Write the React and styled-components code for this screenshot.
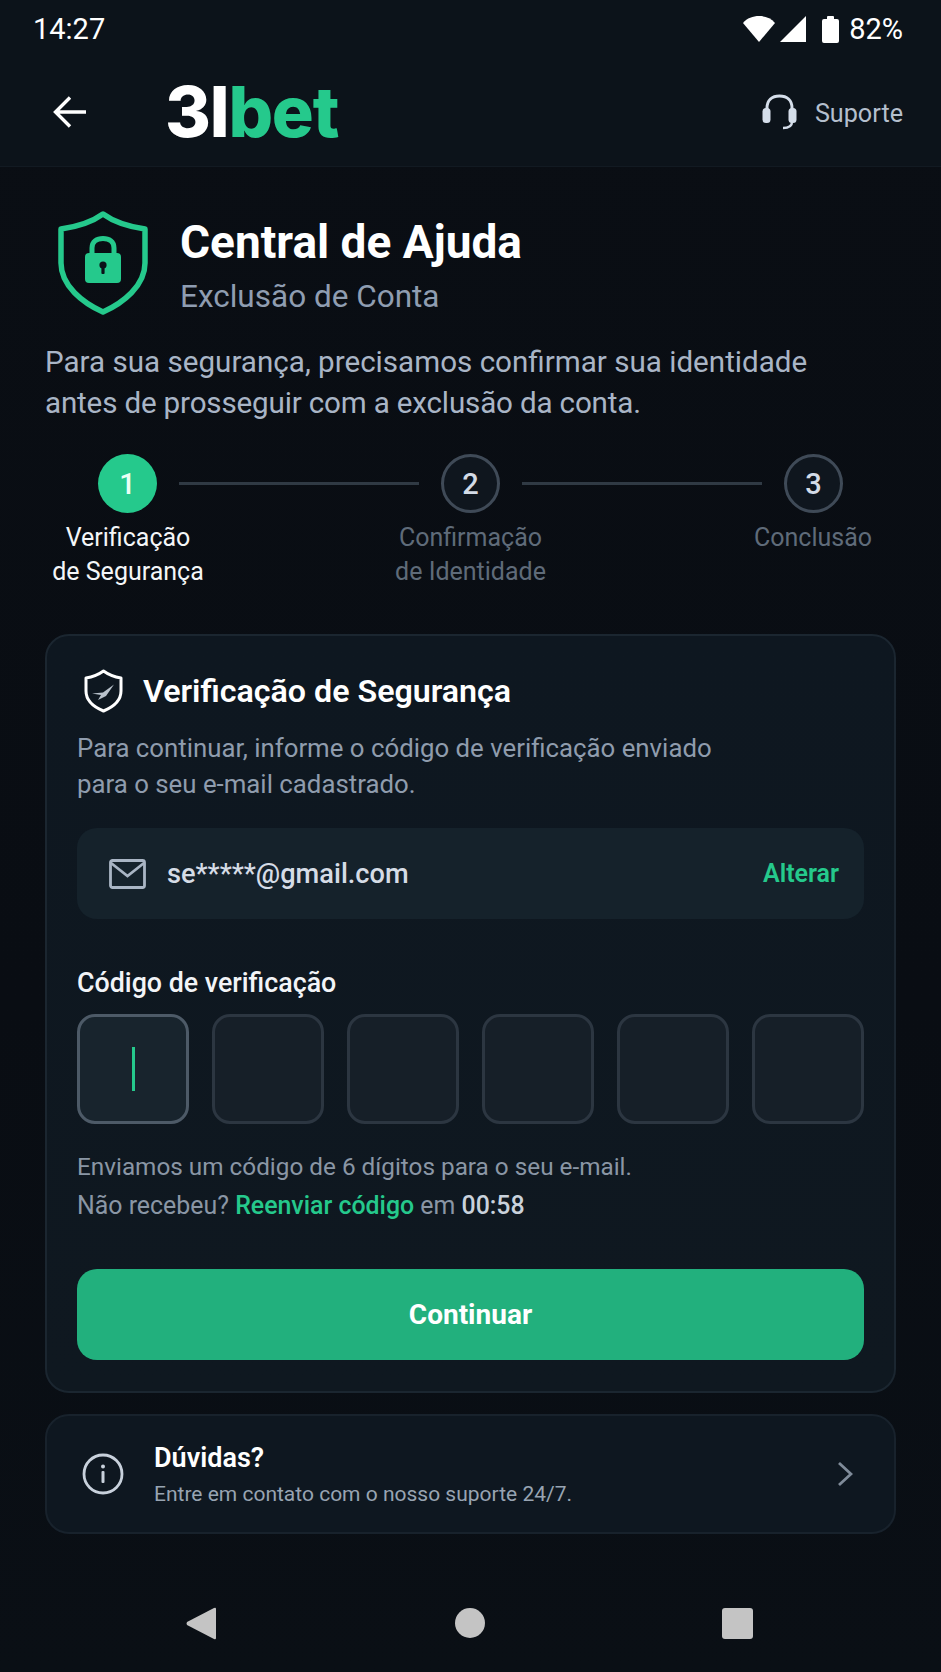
import React from "react";
import styled, { createGlobalStyle } from "styled-components";

const GREEN = "#25c98c";

const Global = createGlobalStyle`
  html, body { margin: 0; padding: 0; background: #090d13; }
  * { box-sizing: border-box; }
  body { font-family: Roboto, "Noto Sans", sans-serif; color: #fff; }
`;

const steps = [
  { n: 1, label: ["Verificação", "de Segurança"], active: true },
  { n: 2, label: ["Confirmação", "de Identidade"] },
  { n: 3, label: ["Conclusão"] },
];

export default function App() {
  return (
    <Page>
      <Global />
      <TopArea>
        <StatusBar>
          <Time>14:27</Time>
          <StatusIcons>
            <svg width="32" height="26" viewBox="0 0 32 26">
              <path d="M0 7 C4 2 10 0 16 0 C22 0 28 2 32 7 L16 26 Z" fill="#fff" />
            </svg>
            <svg width="26" height="26" viewBox="0 0 26 26">
              <path d="M26 0 V26 H0 Z" fill="#fff" />
            </svg>
            <Battery width="17" height="28" viewBox="0 0 17 28">
              <path d="M5 2 a1 1 0 0 1 1-1 h5 a1 1 0 0 1 1 1 v2 h3 a2 2 0 0 1 2 2 v20 a2 2 0 0 1-2 2 H2 a2 2 0 0 1-2-2 V6 a2 2 0 0 1 2-2 h3 z" fill="#fff" />
            </Battery>
            <Percent>82%</Percent>
          </StatusIcons>
        </StatusBar>
        <Header>
          <BackIcon width="34" height="32" viewBox="0 0 34 32" fill="none" stroke="#fff" strokeWidth="3.4">
            <path d="M33 16 H3 M17 1.5 L2.5 16 L17 30.5" />
          </BackIcon>
          <Logo>3l<span>bet</span></Logo>
          <Support>
            <svg width="35" height="36" viewBox="0 0 35 36" fill="none">
              <path d="M5 19 V14 C5 6 10 2 17.5 2 C25 2 30 6 30 14 V19" stroke="#d5deea" strokeWidth="3" />
              <rect x="0.5" y="14" width="8" height="15" rx="3.5" fill="#d5deea" />
              <rect x="26.5" y="14" width="8" height="15" rx="3.5" fill="#d5deea" />
              <path d="M30 28 C30 32 27 34 21 34" stroke="#d5deea" strokeWidth="2.4" />
            </svg>
            <SupportText>Suporte</SupportText>
          </Support>
        </Header>
      </TopArea>

      <Main>
        <Hero>
          <svg width="90" height="104" viewBox="0 0 90 104" fill="none">
            <path
              d="M45 3 C34 11 17 16 3 18 V52 C3 75 25 92 45 101 C65 92 87 75 87 52 V18 C73 16 56 11 45 3 Z"
              stroke={GREEN}
              strokeWidth="5.5"
              strokeLinejoin="round"
            />
            <path d="M34 44 V37 C34 30 39 27.5 45 27.5 C51 27.5 56 30 56 37 V44" stroke={GREEN} strokeWidth="5" />
            <rect x="27" y="42" width="36" height="30" rx="4" fill={GREEN} />
            <circle cx="45" cy="54" r="3.6" fill="#0b1118" />
            <rect x="43.4" y="55" width="3.2" height="8" rx="1" fill="#0b1118" />
          </svg>
          <HeroText>
            <Title>Central de Ajuda</Title>
            <Subtitle>Exclusão de Conta</Subtitle>
          </HeroText>
        </Hero>

        <Intro>
          Para sua segurança, precisamos confirmar sua identidade
          <IntroTail>antes de prosseguir com a exclusão da conta.</IntroTail>
        </Intro>

        <Stepper>
          <StepCircles>
            <Circle $active>1</Circle>
            <Connector />
            <Circle>2</Circle>
            <Connector />
            <Circle>3</Circle>
          </StepCircles>
          <StepLabels>
            {steps.map((s) => (
              <StepLabel key={s.n} $active={s.active}>
                {s.label.map((l) => (
                  <div key={l}>{l}</div>
                ))}
              </StepLabel>
            ))}
          </StepLabels>
        </Stepper>

        <Card>
          <CardHead>
            <svg width="39" height="44" viewBox="0 0 39 44" fill="none">
              <path
                d="M19.5 2 C14 6 8 8 2 9 V22 C2 32 11 38.5 19.5 42 C28 38.5 37 32 37 22 V9 C31 8 25 6 19.5 2 Z"
                stroke="#fff"
                strokeWidth="3"
                strokeLinejoin="round"
              />
              <path d="M8 24.5 L19 23.5 L30 15.5 L22 27 L14 31 L17 26 Z" fill="#b9c2cc" />
            </svg>
            <CardTitle>Verificação de Segurança</CardTitle>
          </CardHead>
          <CardText>
            Para continuar, informe o código de verificação enviado
            <br />
            para o seu e-mail cadastrado.
          </CardText>

          <EmailBox>
            <svg width="37" height="30" viewBox="0 0 37 30" fill="none" stroke="#a9b5c4" strokeWidth="2.8">
              <rect x="1.5" y="1.5" width="34" height="27" rx="2" />
              <path d="M2 4 L18.5 17 L35 4" />
            </svg>
            <EmailText>se*****@gmail.com</EmailText>
            <ChangeLink>Alterar</ChangeLink>
          </EmailBox>

          <FieldLabel>Código de verificação</FieldLabel>
          <OtpRow>
            {[0, 1, 2, 3, 4, 5].map((i) => (
              <OtpBox key={i} $focused={i === 0}>
                {i === 0 && <Caret />}
              </OtpBox>
            ))}
          </OtpRow>

          <Hints>
            <Hint>Enviamos um código de 6 dígitos para o seu e-mail.</Hint>
            <Hint $large>
              Não recebeu? <Resend>Reenviar código</Resend> em <Timer>00:58</Timer>
            </Hint>
          </Hints>

          <PrimaryButton>Continuar</PrimaryButton>
        </Card>

        <HelpCard>
          <svg width="42" height="42" viewBox="0 0 42 42" fill="none">
            <circle cx="21" cy="21" r="19" stroke="#c8d1dc" strokeWidth="2.8" />
            <circle cx="21" cy="13.5" r="2" fill="#c8d1dc" />
            <rect x="19.5" y="18" width="3" height="12" rx="1" fill="#c8d1dc" />
          </svg>
          <HelpText>
            <HelpTitle>Dúvidas?</HelpTitle>
            <HelpSub>Entre em contato com o nosso suporte 24/7.</HelpSub>
          </HelpText>
          <svg width="16" height="26" viewBox="0 0 16 26" fill="none" stroke="#7f8b99" strokeWidth="2.8">
            <path d="M2 2 L14 13 L2 24" />
          </svg>
        </HelpCard>
      </Main>

      <NavBar>
        <svg width="30" height="33" viewBox="0 0 30 33">
          <path d="M30 2 V31 Q30 33 28 32 L1 18 Q0 16.5 1 15 L28 1 Q30 0 30 2 Z" fill="#c4c4c4" />
        </svg>
        <NavDot />
        <NavSquare />
      </NavBar>
    </Page>
  );
}

const Page = styled.div`
  width: 941px;
  height: 1672px;
  overflow: hidden;
  display: flex;
  flex-direction: column;
  background: linear-gradient(180deg, #0a0e14 0%, #090d13 60%, #0a0f15 100%);
`;

const TopArea = styled.div`
  height: 167px;
  background: #0c131a;
  border-bottom: 1px solid #121a22;
`;

const StatusBar = styled.div`
  height: 56px;
  padding: 2px 38px 0 33px;
  display: flex;
  align-items: center;
  justify-content: space-between;
`;

const Time = styled.span`
  font-size: 29px;
  letter-spacing: 0;
`;

const StatusIcons = styled.div`
  display: flex;
  align-items: center;
  gap: 5px;
`;

const Battery = styled.svg`
  margin-left: 11px;
`;

const Percent = styled.span`
  font-size: 29px;
  margin-left: 5px;
`;

const Header = styled.header`
  height: 111px;
  display: flex;
  align-items: center;
  padding: 0 38px 0 53px;
`;

const BackIcon = styled.svg`
  flex: none;
`;

const Logo = styled.div`
  margin-left: 78px;
  font-family: Inter, Roboto, sans-serif;
  font-weight: 800;
  font-size: 70px;
  letter-spacing: -1.2px;
  line-height: 1;
  span {
    color: ${GREEN};
  }
`;

const Support = styled.div`
  margin-left: auto;
  display: flex;
  align-items: center;
  gap: 18px;
`;

const SupportText = styled.span`
  margin-top: 3px;
  font-size: 25.2px;
  color: #b4bfcd;
`;

const Main = styled.main`
  flex: 1;
  padding: 44px 45px 0;
  display: flex;
  flex-direction: column;
`;

const Hero = styled.div`
  display: flex;
  align-items: center;
  gap: 32px;
  padding-left: 13px;
`;

const HeroText = styled.div`
  display: flex;
  flex-direction: column;
  gap: 12px;
  padding-top: 5px;
`;

const Title = styled.h1`
  margin: 0;
  font-size: 46px;
  font-weight: 700;
  line-height: 50px;
`;

const Subtitle = styled.div`
  font-size: 31.5px;
  line-height: 36px;
  color: #8f9db1;
`;

const Intro = styled.p`
  margin: 27px 0 0;
  font-size: 29.6px;
  line-height: 40.5px;
  color: #a9b5c6;
`;

const IntroTail = styled.span`
  display: block;
  letter-spacing: -0.17px;
`;

const Stepper = styled.div`
  margin-top: 31px;
`;

const StepCircles = styled.div`
  display: flex;
  align-items: center;
  padding: 0 53px;
`;

const Circle = styled.div`
  width: 59px;
  height: 59px;
  flex: none;
  border-radius: 50%;
  display: flex;
  align-items: center;
  justify-content: center;
  font-size: 29px;
  font-weight: 500;
  color: ${(p) => (p.$active ? "#eafff5" : "#d3dbe6")};
  background: ${(p) => (p.$active ? GREEN : "#0f161e")};
  border: ${(p) => (p.$active ? "none" : "3px solid #3f4a57")};
`;

const Connector = styled.div`
  flex: 1;
  height: 3px;
  margin: 0 22px;
  background: #303a44;
`;

const StepLabels = styled.div`
  display: flex;
  justify-content: space-between;
  margin-top: 8px;
`;

const StepLabel = styled.div`
  width: 166px;
  text-align: center;
  font-size: 25px;
  line-height: 34px;
  white-space: nowrap;
  color: ${(p) => (p.$active ? "#f4f6f8" : "#5f6b79")};
`;

const Card = styled.section`
  margin-top: 45px;
  height: 759px;
  padding: 33px 30px 0;
  border-radius: 24px;
  border: 2px solid #1b2630;
  background: linear-gradient(180deg, #0e1720 0%, #0f1820 100%);
`;

const CardHead = styled.div`
  display: flex;
  align-items: center;
  gap: 20px;
  padding-left: 7px;
`;

const CardTitle = styled.h2`
  margin: 0;
  font-size: 32.2px;
  font-weight: 600;
  line-height: 44px;
`;

const CardText = styled.p`
  margin: 17px 0 0;
  font-size: 25.8px;
  line-height: 36px;
  color: #8f9cad;
`;

const EmailBox = styled.div`
  margin-top: 26px;
  height: 91px;
  padding: 0 25px 0 32px;
  display: flex;
  align-items: center;
  gap: 21px;
  border-radius: 20px;
  background: #15222b;
`;

const EmailText = styled.span`
  font-size: 27.2px;
  font-weight: 500;
  color: #d5dce6;
`;

const ChangeLink = styled.span`
  margin-left: auto;
  font-size: 25px;
  font-weight: 600;
  color: ${GREEN};
`;

const FieldLabel = styled.div`
  margin-top: 47px;
  font-size: 26.8px;
  font-weight: 500;
  line-height: 34px;
  color: #f2f4f7;
`;

const OtpRow = styled.div`
  margin-top: 14px;
  display: grid;
  grid-template-columns: repeat(6, 1fr);
  gap: 23px;
`;

const OtpBox = styled.div`
  height: 110px;
  border-radius: 18px;
  display: flex;
  align-items: center;
  justify-content: center;
  background: ${(p) => (p.$focused ? "#18242d" : "#161f28")};
  border: 3px solid ${(p) => (p.$focused ? "#4d5a67" : "#2c3641")};
`;

const Caret = styled.div`
  width: 3px;
  height: 44px;
  background: ${GREEN};
`;

const Hints = styled.div`
  margin-top: 23px;
`;

const Hint = styled.p`
  margin: 0;
  font-size: ${(p) => (p.$large ? "24.9px" : "24.3px")};
  line-height: 39px;
  color: #8a96a5;
`;

const Resend = styled.span`
  color: ${GREEN};
  font-weight: 500;
`;

const Timer = styled.span`
  color: #c9d2dc;
  font-weight: 500;
`;

const PrimaryButton = styled.button`
  display: block;
  width: 100%;
  height: 91px;
  margin-top: 44px;
  border: none;
  border-radius: 20px;
  background: #22b07d;
  color: #fff;
  font-family: inherit;
  font-size: 28px;
  font-weight: 700;
`;

const HelpCard = styled.section`
  margin-top: 21px;
  height: 120px;
  padding: 0 41px 0 35px;
  display: flex;
  align-items: center;
  border-radius: 24px;
  border: 2px solid #18222c;
  background: #0e1720;
`;

const HelpText = styled.div`
  margin-left: 30px;
  flex: 1;
`;

const HelpTitle = styled.div`
  font-size: 27px;
  font-weight: 600;
  line-height: 36px;
`;

const HelpSub = styled.div`
  margin-top: 3px;
  font-size: 21px;
  line-height: 30px;
  color: #98a4b2;
`;

const NavBar = styled.nav`
  height: 98px;
  padding: 0 188px 0 186px;
  display: flex;
  align-items: center;
  justify-content: space-between;
`;

const NavDot = styled.div`
  width: 30px;
  height: 30px;
  margin-left: 2px;
  border-radius: 50%;
  background: #c4c4c4;
`;

const NavSquare = styled.div`
  width: 31px;
  height: 31px;
  border-radius: 3px;
  background: #c4c4c4;
`;
